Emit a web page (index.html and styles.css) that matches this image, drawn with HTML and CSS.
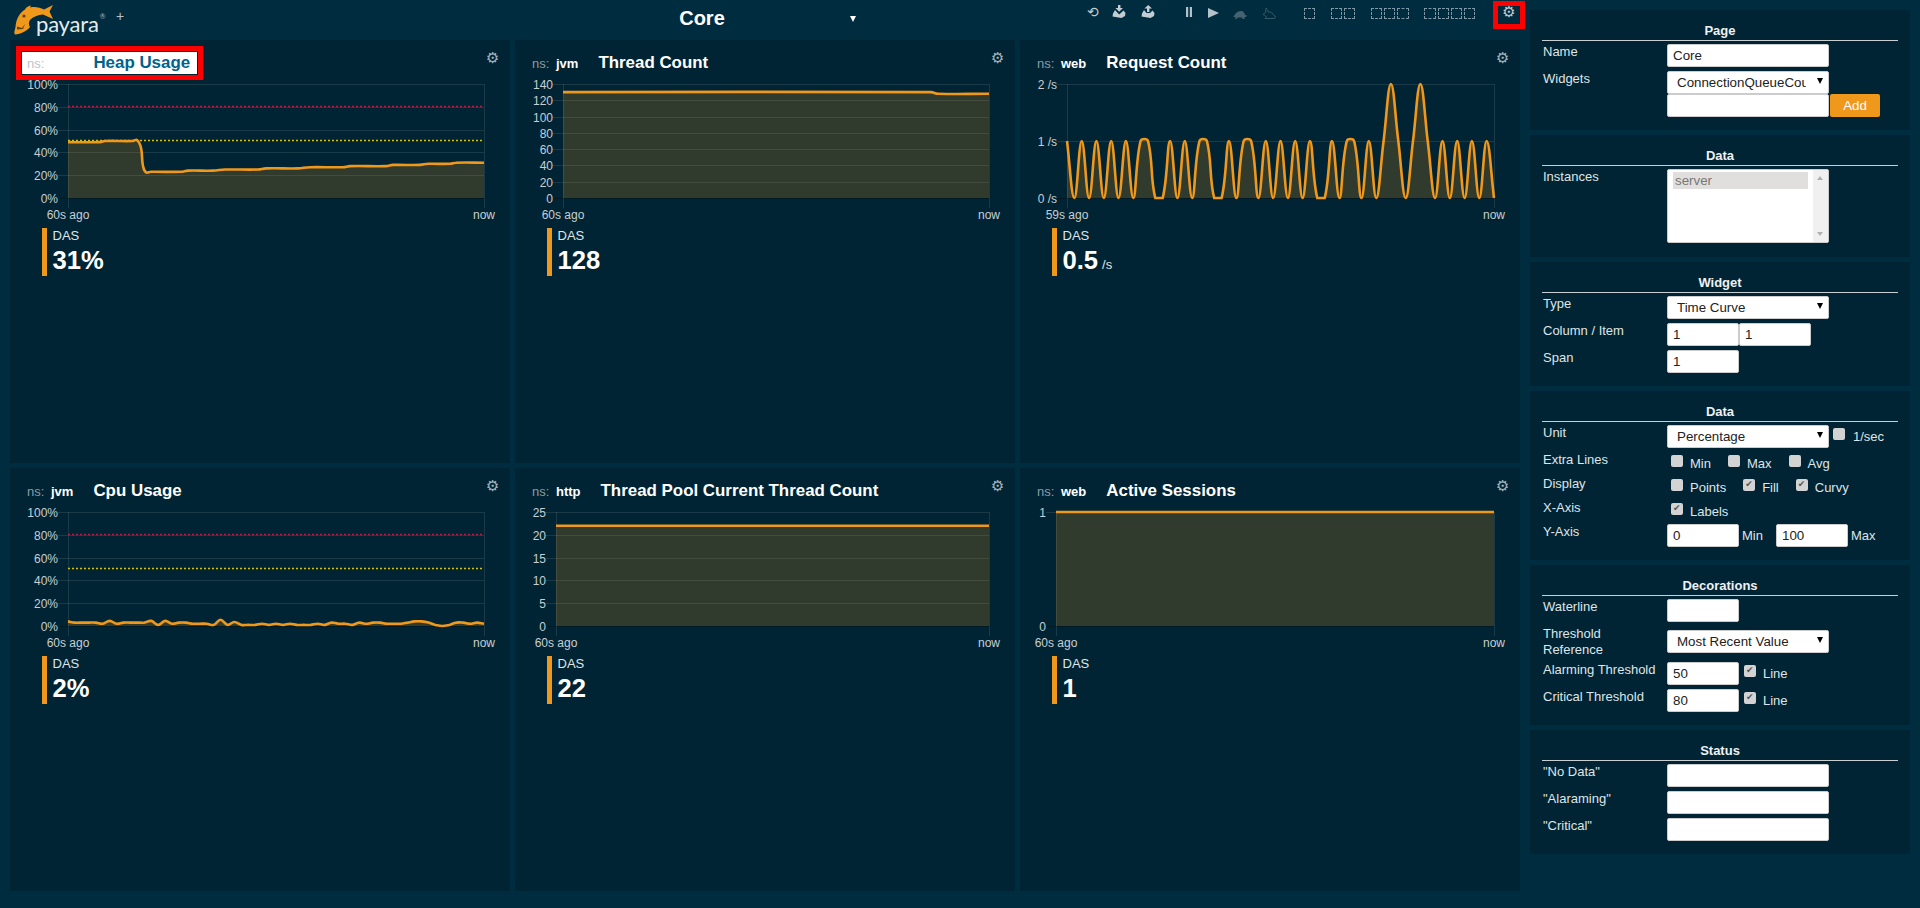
FILE: index.html
```html
<!DOCTYPE html>
<html lang="en">
<head>
    <meta charset="UTF-8">
    <title>Payara Monitoring Console</title>
    <link rel="stylesheet" href="styles.css">
</head>
<body>
<div class="console">
    <div class="main">
        <div class="topbar">
            <div class="logo">
                <svg width="56" height="38" viewBox="0 0 56 38">
                    <path class="fish" d="M15 34.500C13.500 33 15 30 15.500 27C16 20 19 13 25 9.500C26 7.500 28 6 31 5.500L30 7.500C35 6.500 40 7.500 44 9.500L53 5L49.500 11.500L53 19L43 14.500C38 15 33 16.500 30 20C28.500 22 28.500 25 30 27C27 31 21 34 15 34.500Z"/>
                    <circle class="fish-eye" cx="24" cy="16" r="1.600"/>
                    <path class="fish-eye" d="M17 26.500l5 1.500l3 -4l-2 5l-6 .5z"/>
                </svg>
                <span class="logo-text">payara<sup>®</sup></span>
            </div>
            <span class="add-page">+</span>
            <div class="page-title">Core<span class="page-caret"></span></div>
            <div class="tools">
                <span class="tool-glyph">⟲</span>
                <svg class="tool tool-import" width="14" height="13" viewBox="0 0 14 13">
                    <path d="M6 0h2.400v3H11L7.200 6.800L3.400 3H6z"/>
                    <path d="M3 5L1 8.500L0.500 11.500L9.500 13L13 11L13.500 8L11.500 5.500L7.200 9.500z"/>
                </svg>
                <svg class="tool tool-export" width="14" height="13" viewBox="0 0 14 13">
                    <path d="M6 7V3.500H3.400L7.200 0L11 3.500H8.400V7z"/>
                    <path d="M3 5L1 8.500L0.500 11.500L9.500 13L13 11L13.500 8L11.500 5.500L9 8H5.500z"/>
                </svg>
                <svg class="tool tool-pause" width="6" height="10" viewBox="0 0 6 10">
                    <rect width="2.200" height="10"/>
                    <rect x="3.800" width="2.200" height="10"/>
                </svg>
                <svg class="tool tool-play" width="11" height="10" viewBox="0 0 11 10">
                    <path d="M0 0L11 5L0 10z"/>
                </svg>
                <svg class="tool tool-turtle" width="14" height="8" viewBox="0 0 14 8">
                    <path d="M1 5C2 2 5 0 8 0C10.500 0 11.500 2 12 4L14 4.500L13 6L11.500 6L11.500 8H9.500L9 6.500H4.500L4 8H2.200L2.500 6L0 6z"/>
                </svg>
                <svg class="tool tool-rabbit" width="14" height="11" viewBox="0 0 14 11">
                    <path d="M4 0C5 1 6 2.500 6 4C8 3.500 11 5 12 7.500L13.500 8.500L12.500 10.500H3L4.500 9L2.500 7L1 6.500L3.500 4.500z"/>
                </svg>
                <div class="layout-group layout-first"><span></span></div>
                <div class="layout-group"><span></span><span></span></div>
                <div class="layout-group"><span></span><span></span><span></span></div>
                <div class="layout-group"><span></span><span></span><span></span><span></span></div>
                <div class="settings-btn">⚙</div>
            </div>
        </div>

        <div class="widgets">
            <div class="widget">
                <div class="widget-head highlighted">
                    <span class="ns-label">ns:</span>
                    <span class="ns-name">jvm</span>
                    <span class="widget-title">Heap Usage</span>
                </div>
                <span class="widget-gear">⚙</span>
                <div class="chart" id="chartHeap"></div>
                <div class="legend">
                    <div class="legend-name">DAS</div>
                    <div class="legend-value">31%</div>
                </div>
            </div>
            <div class="widget">
                <div class="widget-head">
                    <span class="ns-label">ns:</span>
                    <span class="ns-name">jvm</span>
                    <span class="widget-title">Thread Count</span>
                </div>
                <span class="widget-gear">⚙</span>
                <div class="chart" id="chartThreads"></div>
                <div class="legend">
                    <div class="legend-name">DAS</div>
                    <div class="legend-value">128</div>
                </div>
            </div>
            <div class="widget">
                <div class="widget-head">
                    <span class="ns-label">ns:</span>
                    <span class="ns-name">web</span>
                    <span class="widget-title">Request Count</span>
                </div>
                <span class="widget-gear">⚙</span>
                <div class="chart" id="chartRequests"></div>
                <div class="legend">
                    <div class="legend-name">DAS</div>
                    <div class="legend-value">0.5<span class="legend-unit">/s</span></div>
                </div>
            </div>
            <div class="widget">
                <div class="widget-head">
                    <span class="ns-label">ns:</span>
                    <span class="ns-name">jvm</span>
                    <span class="widget-title">Cpu Usage</span>
                </div>
                <span class="widget-gear">⚙</span>
                <div class="chart" id="chartCpu"></div>
                <div class="legend">
                    <div class="legend-name">DAS</div>
                    <div class="legend-value">2%</div>
                </div>
            </div>
            <div class="widget">
                <div class="widget-head">
                    <span class="ns-label">ns:</span>
                    <span class="ns-name">http</span>
                    <span class="widget-title">Thread Pool Current Thread Count</span>
                </div>
                <span class="widget-gear">⚙</span>
                <div class="chart" id="chartPool"></div>
                <div class="legend">
                    <div class="legend-name">DAS</div>
                    <div class="legend-value">22</div>
                </div>
            </div>
            <div class="widget">
                <div class="widget-head">
                    <span class="ns-label">ns:</span>
                    <span class="ns-name">web</span>
                    <span class="widget-title">Active Sessions</span>
                </div>
                <span class="widget-gear">⚙</span>
                <div class="chart" id="chartSessions"></div>
                <div class="legend">
                    <div class="legend-name">DAS</div>
                    <div class="legend-value">1</div>
                </div>
            </div>
        </div>
    </div>

    <div class="settings">
        <div class="panel">
            <h3>Page</h3>
            <div class="row">
                <label>Name</label>
                <div><input type="text" class="field" value="Core"></div>
            </div>
            <div class="row row-stack">
                <label>Widgets</label>
                <div>
                    <div class="select-wrap"><select class="field"><option>ConnectionQueueCount</option></select></div>
                    <div class="add-line">
                        <input type="text" class="field">
                        <button type="button" class="add-btn">Add</button>
                    </div>
                </div>
            </div>
        </div>

        <div class="panel">
            <h3>Data</h3>
            <div class="row row-list">
                <label>Instances</label>
                <div class="listbox">
                    <div class="listbox-items"><div class="listbox-item">server</div></div>
                    <div class="listbox-scroll"><span class="scroll-up"></span><span class="scroll-down"></span></div>
                </div>
            </div>
        </div>

        <div class="panel">
            <h3>Widget</h3>
            <div class="row">
                <label>Type</label>
                <div class="select-wrap"><select class="field"><option>Time Curve</option></select></div>
            </div>
            <div class="row">
                <label>Column / Item</label>
                <div class="pair">
                    <input type="text" class="field small" value="1">
                    <input type="text" class="field small" value="1">
                </div>
            </div>
            <div class="row">
                <label>Span</label>
                <div><input type="text" class="field small" value="1"></div>
            </div>
        </div>

        <div class="panel">
            <h3>Data</h3>
            <div class="row">
                <label>Unit</label>
                <div class="unit-line">
                    <div class="select-wrap"><select class="field"><option>Percentage</option></select></div>
                    <label class="check"><input type="checkbox">1/sec</label>
                </div>
            </div>
            <div class="row row-checks">
                <label>Extra Lines</label>
                <div class="checks">
                    <label class="check"><input type="checkbox">Min</label>
                    <label class="check"><input type="checkbox">Max</label>
                    <label class="check"><input type="checkbox">Avg</label>
                </div>
            </div>
            <div class="row row-checks">
                <label>Display</label>
                <div class="checks">
                    <label class="check"><input type="checkbox">Points</label>
                    <label class="check"><input type="checkbox" checked>Fill</label>
                    <label class="check"><input type="checkbox" checked>Curvy</label>
                </div>
            </div>
            <div class="row row-checks">
                <label>X-Axis</label>
                <div class="checks">
                    <label class="check"><input type="checkbox" checked>Labels</label>
                </div>
            </div>
            <div class="row">
                <label>Y-Axis</label>
                <div class="axis-line">
                    <input type="text" class="field small" value="0"><span class="axis-min">Min</span>
                    <input type="text" class="field small" value="100"><span>Max</span>
                </div>
            </div>
        </div>

        <div class="panel">
            <h3>Decorations</h3>
            <div class="row">
                <label>Waterline</label>
                <div><input type="text" class="field small"></div>
            </div>
            <div class="row row-threshold">
                <label>Threshold<br>Reference</label>
                <div class="select-wrap"><select class="field"><option>Most Recent Value</option></select></div>
            </div>
            <div class="row">
                <label>Alarming Threshold</label>
                <div class="threshold-line">
                    <input type="text" class="field small" value="50">
                    <label class="check"><input type="checkbox" checked>Line</label>
                </div>
            </div>
            <div class="row">
                <label>Critical Threshold</label>
                <div class="threshold-line">
                    <input type="text" class="field small" value="80">
                    <label class="check"><input type="checkbox" checked>Line</label>
                </div>
            </div>
        </div>

        <div class="panel">
            <h3>Status</h3>
            <div class="row">
                <label>"No Data"</label>
                <div><input type="text" class="field"></div>
            </div>
            <div class="row">
                <label>"Alaraming"</label>
                <div><input type="text" class="field"></div>
            </div>
            <div class="row">
                <label>"Critical"</label>
                <div><input type="text" class="field"></div>
            </div>
        </div>
    </div>
</div>
<script src="charts.js"></script>
</body>
</html>
```

FILE: styles.css
```css
body {
    font-family: 'Liberation Sans', Arial, sans-serif;
    font-size: 13px;
    margin: 0;
    padding: 0;
    background-color: #002c3f;
    color: #dfe5e8;
    overflow: hidden;
}

.console {
    display: flex;
    height: 908px;
}

.main {
    width: 1530px;
    flex-shrink: 0;
}

/* top bar */
.topbar {
    display: flex;
    align-items: flex-start;
    height: 40px;
}

.logo {
    position: relative;
    width: 114px;
    height: 40px;
}

.fish {
    fill: #f0981b;
}

.fish-eye {
    fill: #5a4313;
}

.logo-text {
    position: absolute;
    left: 36px;
    top: 11px;
    font-family: 'Lato', sans-serif;
    font-size: 22px;
    line-height: 26px;
    color: #e6ebed;
    letter-spacing: -0.2px;
}

.logo-text sup {
    font-size: 7px;
    line-height: 0;
    vertical-align: 13px;
    color: #a9b6bd;
    margin-left: 1px;
}

.add-page {
    width: 10px;
    margin-left: 2px;
    margin-top: 8px;
    font-size: 14px;
    color: #b9c4ca;
}

.page-title {
    position: relative;
    width: 310px;
    margin-left: 421px;
    margin-top: 7px;
    text-align: center;
    font-size: 20px;
    font-weight: bold;
    line-height: 23px;
    color: #fff;
}

.page-caret {
    position: absolute;
    right: 1px;
    top: 9px;
    border-left: 3px solid transparent;
    border-right: 3px solid transparent;
    border-top: 6px solid #fff;
}

.tools {
    display: flex;
    align-items: flex-start;
    margin-left: 230px;
}

.tool {
    fill: #c3ccd2;
}

.tool-glyph {
    width: 11px;
    margin-top: 2px;
    font-family: 'DejaVu Sans', sans-serif;
    font-size: 14px;
    line-height: 20px;
    color: #c3ccd2;
}

.tool-import {
    margin: 5px 0 0 14px;
}

.tool-export {
    margin: 5px 0 0 15px;
}

.tool-pause {
    margin: 7px 0 0 31px;
    fill: #b5c1c8;
}

.tool-play {
    margin: 8px 0 0 16px;
    fill: #b5c1c8;
}

.tool-turtle {
    margin: 11px 0 0 14px;
    fill: #44626f;
}

.tool-rabbit {
    margin: 8px 0 0 15px;
    fill: none;
    stroke: #44626f;
    stroke-width: 0.8;
}

.layout-group {
    display: flex;
    gap: 2px;
    margin: 8px 0 0 15.5px;
}

.layout-first {
    margin-left: 28px;
}

.layout-group span {
    box-sizing: border-box;
    width: 11.3px;
    height: 11px;
    border: 1px dashed #7f98a5;
}

.settings-btn {
    box-sizing: border-box;
    width: 32px;
    height: 28px;
    margin: 1px 0 0 17.5px;
    border: 5px solid #f00;
    font-family: 'DejaVu Sans', sans-serif;
    font-size: 15px;
    line-height: 12px;
    text-align: center;
    color: #c3ccd2;
}

/* widgets */
.widgets {
    display: grid;
    grid-template-columns: repeat(3, 500px);
    grid-auto-rows: 423px;
    gap: 5px;
    margin-left: 10px;
}

.widget {
    position: relative;
    background-color: #002433;
}

.widget-head {
    display: flex;
    align-items: baseline;
    box-sizing: border-box;
    height: 22px;
    margin: 12px 0 4px 12px;
    padding: 0 7px 0 5px;
    line-height: 22px;
}

.ns-label {
    width: 24px;
    color: #8c9ca6;
}

.ns-name {
    margin-right: 20px;
    font-weight: bold;
    color: #fff;
}

.widget-title {
    font-size: 16.9px;
    font-weight: bold;
    color: #fff;
}

.highlighted {
    width: fit-content;
    background-color: #fff;
    box-shadow: 0 0 0 1px #002433, 0 0 0 6px #f00;
}

.highlighted .widget-title {
    color: #00638c;
}

.highlighted .ns-label {
    color: #bcc4c9;
}

.widget-gear {
    position: absolute;
    left: 476px;
    top: 9px;
    font-family: 'DejaVu Sans', sans-serif;
    font-size: 15px;
    line-height: 18px;
    color: #a5b5bf;
}

.chart {
    height: 150px;
}

.chart svg {
    display: block;
}

.chart-label {
    font-size: 12px;
    fill: #c8cfd3;
}

.legend {
    box-sizing: border-box;
    height: 48px;
    margin-left: 32px;
    padding-left: 5.5px;
    border-left: 5px solid #f0981b;
}

.legend-name {
    line-height: 16px;
    color: #dfe5e8;
}

.legend-value {
    font-size: 25.6px;
    font-weight: bold;
    line-height: 32px;
    color: #fff;
}

.legend-unit {
    margin-left: 4px;
    font-size: 13px;
    font-weight: normal;
    color: #dfe5e8;
}

/* settings column */
.settings {
    display: flex;
    flex-direction: column;
    gap: 5px;
    width: 380px;
    padding-top: 10px;
}

.panel {
    padding: 13px 12px 9px;
    background-color: #002433;
}

.panel h3 {
    margin: 0 0 3px;
    padding-bottom: 1px;
    border-bottom: 1px solid #c8ced2;
    font-size: 13px;
    line-height: 16px;
    text-align: center;
    color: #eef1f3;
}

.row {
    display: grid;
    grid-template-columns: 125px 1fr;
    min-height: 23px;
    margin-bottom: 4px;
}

.row > label {
    padding-left: 1px;
    line-height: 16px;
    color: #dfe5e8;
}

.field {
    box-sizing: border-box;
    display: block;
    width: 162px;
    height: 23px;
    margin: 0;
    padding: 0 5px;
    border: 1px solid #ccc;
    border-radius: 2px;
    background-color: #fff;
    font-family: inherit;
    font-size: 13.33px;
    color: #222;
    outline: none;
}

.field.small {
    width: 72px;
}

select.field {
    appearance: none;
    padding: 0 22px 0 9px;
}

.select-wrap {
    position: relative;
    width: 162px;
}

.select-wrap::after {
    content: "";
    position: absolute;
    right: 6px;
    top: 7px;
    border-left: 3px solid transparent;
    border-right: 3px solid transparent;
    border-top: 6px solid #000;
}

.add-line {
    display: flex;
    gap: 1px;
}

.add-btn {
    width: 50px;
    height: 23px;
    padding: 0;
    border: none;
    border-radius: 2px;
    background-color: #f0981b;
    font-family: inherit;
    font-size: 13.33px;
    color: #fff;
}

.row-list {
    margin-bottom: 5px;
}

.listbox {
    box-sizing: border-box;
    display: flex;
    width: 162px;
    height: 74px;
    border: 1px solid #ccc;
    border-radius: 2px;
    background-color: #fff;
}

.listbox-items {
    flex: 1;
    padding: 2px 5px;
}

.listbox-item {
    height: 17px;
    padding-left: 2px;
    background-color: #e0dfdd;
    font-size: 13.33px;
    line-height: 17px;
    color: #777;
}

.listbox-scroll {
    position: relative;
    width: 15px;
    background-color: #f0f0f0;
}

.scroll-up,
.scroll-down {
    position: absolute;
    left: 4px;
    border-left: 3.5px solid transparent;
    border-right: 3.5px solid transparent;
}

.scroll-up {
    top: 6px;
    border-bottom: 4px solid #b0b0b0;
}

.scroll-down {
    bottom: 6px;
    border-top: 4px solid #b0b0b0;
}

.pair {
    display: flex;
}

.check {
    display: inline-flex;
    align-items: flex-start;
    line-height: 17px;
    color: #dfe5e8;
}

.check input {
    appearance: none;
    box-sizing: border-box;
    position: relative;
    width: 12px;
    height: 12px;
    margin: 0 7px 0 0;
    border-radius: 2px;
    background-color: #d3d3d3;
}

.check input:checked::after {
    content: "✔";
    position: absolute;
    left: 2px;
    top: 0;
    font-family: 'DejaVu Sans', sans-serif;
    font-size: 9px;
    line-height: 11px;
    color: #555;
}

.unit-line {
    display: flex;
    align-items: flex-start;
}

.unit-line .check {
    margin: 3px 0 0 4px;
}

.unit-line .check input {
    margin-right: 8px;
}

.row-checks {
    min-height: 20px;
}

.row-checks .check {
    padding-top: 3px;
}

.checks {
    display: flex;
    gap: 17px;
    margin-left: 4px;
}

.axis-line {
    display: flex;
    align-items: center;
    gap: 3px;
}

.axis-min {
    width: 31px;
}

.row-threshold {
    min-height: 32px;
}

.row-threshold .select-wrap {
    margin-top: 4px;
}

.threshold-line {
    display: flex;
    align-items: flex-start;
    gap: 5px;
}

.threshold-line .check {
    padding-top: 3px;
}

.threshold-line .check input {
    margin-right: 7px;
}
```

FILE: charts.js
```js
// plot area is the same for all widgets, only the left edge changes with label width
const PLOT_TOP = 6;
const PLOT_BOTTOM = 120;
const PLOT_RIGHT = 474;
const TENSION = 0.4;
const CHART_HEIGHT = 150;

const perSecond = (values, step) => values.map((v, i) => [i * step, v]);

const charts = [
    {
        id: 'chartHeap', left: 58, max: 100, step: 20, suffix: '%', start: '60s ago', thresholds: [80, 50],
        points: [[0, 49], [32, 49], [37, 50], [65, 50], [69, 51], [73, 44], [75, 28], [78, 22.5], [83, 23], [113, 23], [120, 24], [145, 24], [157, 25], [190, 25], [198, 26], [230, 26], [242, 27], [275, 27], [282, 28], [318, 28], [325, 29], [352, 29], [360, 30], [382, 30], [388, 31], [416, 31]]
    },
    {
        id: 'chartThreads', left: 48, max: 140, step: 20, suffix: '', start: '60s ago',
        points: [[0, 130], [368, 130], [375, 128], [426, 128]]
    },
    {
        id: 'chartRequests', left: 47, max: 2, step: 1, suffix: ' /s', start: '59s ago',
        points: perSecond([1, 0, 1, 0, 1, 0, 1, 0, 1, 0, 1, 1, 0, 0, 1, 0, 1, 0, 1, 1, 0, 0, 1, 0, 1, 1, 0, 1, 0, 1, 0, 1, 0, 1, 0, 0, 1, 0, 1, 1, 0, 1, 0, 1, 2, 1, 0, 1, 2, 1, 0, 1, 0, 1, 0, 1, 0, 1, 0], 427 / 58)
    },
    {
        id: 'chartCpu', left: 58, max: 100, step: 20, suffix: '%', start: '60s ago', thresholds: [80, 50],
        points: perSecond([4, 3, 3, 3, 3, 2, 4.5, 2, 3, 3, 3, 3, 4.5, 1, 4.5, 2, 3, 3, 2, 2, 2, 1, 5.5, 1, 3.5, 1, 1, 1, 2, 1, 2, 1, 2, 1, 1, 1, 2, 1, 3, 2, 2, 1, 3, 2, 3, 3, 2, 2, 2, 3, 4, 4, 3, 1, 0, 1, 3, 3, 2, 3, 2], 416 / 60)
    },
    {
        id: 'chartPool', left: 41, max: 25, step: 5, suffix: '', start: '60s ago',
        points: [[0, 22], [433, 22]]
    },
    {
        id: 'chartSessions', left: 36, max: 1, step: 1, suffix: '', start: '60s ago',
        points: [[0, 1], [438, 1]]
    }
];

function clamp(v, low, high) {
    return Math.min(high, Math.max(low, v));
}

// same kind of spline as chart libraries use, control points kept inside the plot
function curvePath(pts) {
    const controls = pts.map((p, i) => {
        const prev = pts[i - 1] || p;
        const next = pts[i + 1] || p;
        const d1 = Math.hypot(p[0] - prev[0], p[1] - prev[1]);
        const d2 = Math.hypot(next[0] - p[0], next[1] - p[1]);
        const total = d1 + d2 || 1;
        const fa = TENSION * d1 / total;
        const fb = TENSION * d2 / total;
        return {
            before: [p[0] - fa * (next[0] - prev[0]), clamp(p[1] - fa * (next[1] - prev[1]), PLOT_TOP, PLOT_BOTTOM)],
            after: [p[0] + fb * (next[0] - prev[0]), clamp(p[1] + fb * (next[1] - prev[1]), PLOT_TOP, PLOT_BOTTOM)]
        };
    });

    let d = `M${pts[0][0].toFixed(1)} ${pts[0][1].toFixed(1)}`;
    for (let i = 1; i < pts.length; i++) {
        const a = controls[i - 1].after;
        const b = controls[i].before;
        d += `C${a[0].toFixed(1)} ${a[1].toFixed(1)} ${b[0].toFixed(1)} ${b[1].toFixed(1)} ${pts[i][0].toFixed(1)} ${pts[i][1].toFixed(1)}`;
    }
    return d;
}

function drawChart(chart) {
    const yOf = v => PLOT_TOP + (PLOT_BOTTOM - PLOT_TOP) * (1 - v / chart.max);
    const pts = chart.points.map(p => [chart.left + p[0], yOf(p[1])]);
    const line = curvePath(pts);
    const last = pts[pts.length - 1];
    const grid = 'rgba(255,255,255,0.1)';
    let svg = '';

    for (let v = chart.max; v >= 0; v -= chart.step) {
        const y = Math.round(yOf(v)) + 0.5;
        const stroke = v === 0 ? 'rgba(0,0,0,0.25)' : grid;
        svg += `<line x1="${chart.left - 10}" x2="${PLOT_RIGHT}" y1="${y}" y2="${y}" stroke="${stroke}"/>`;
        svg += `<text class="chart-label" x="${chart.left - 10}" y="${y + 4}" text-anchor="end">${v}${chart.suffix}</text>`;
    }

    [chart.left, PLOT_RIGHT].forEach(x => {
        svg += `<line x1="${x + 0.5}" x2="${x + 0.5}" y1="${PLOT_TOP}" y2="${PLOT_BOTTOM + 10}" stroke="${grid}"/>`;
    });

    svg += `<text class="chart-label" x="${chart.left}" y="141" text-anchor="middle">${chart.start}</text>`;
    svg += `<text class="chart-label" x="${PLOT_RIGHT}" y="141" text-anchor="middle">now</text>`;

    svg += `<path d="${line}L${last[0]} ${PLOT_BOTTOM}L${chart.left} ${PLOT_BOTTOM}Z" fill="rgba(240,152,27,0.2)"/>`;

    (chart.thresholds || []).forEach(v => {
        const color = v === 80 ? '#c8143c' : '#d8c000';
        const y = Math.floor(yOf(v) - 0.5) + 0.5;
        svg += `<line x1="${chart.left}" x2="${PLOT_RIGHT}" y1="${y}" y2="${y}" stroke="${color}" stroke-width="1.3" stroke-dasharray="2 2"/>`;
    });

    svg += `<path d="${line}" fill="none" stroke="#f0981b" stroke-width="2.6"/>`;

    document.getElementById(chart.id).innerHTML = `<svg width="500" height="${CHART_HEIGHT}">${svg}</svg>`;
}

charts.forEach(drawChart);
```
